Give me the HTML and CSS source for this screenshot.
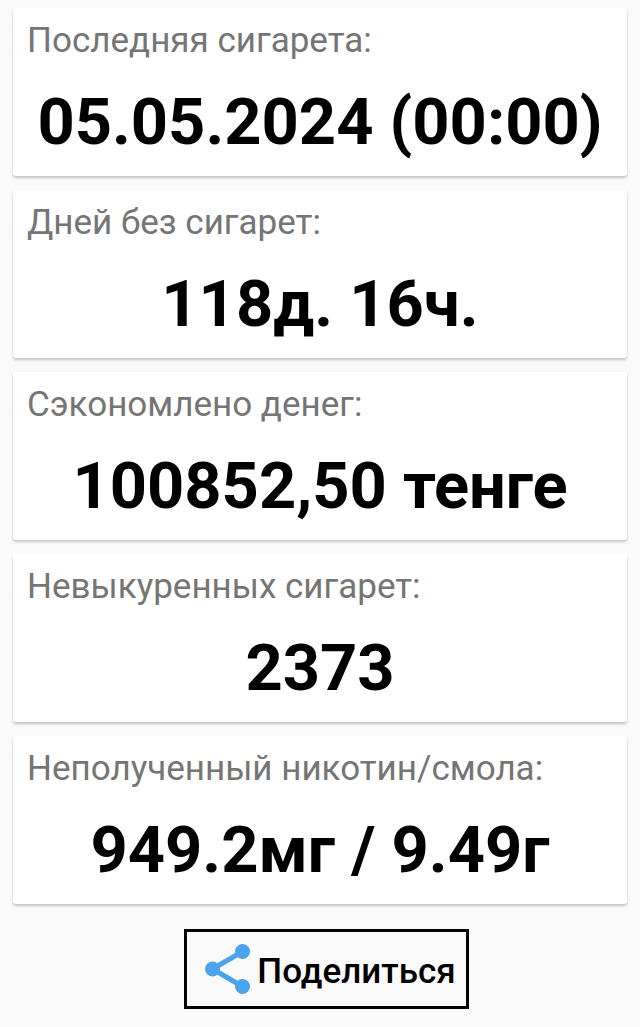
FILE: index.html
```html
<!DOCTYPE html>
<html lang="ru">

<head>
	<meta charset="UTF-8">
	<meta name="viewport" content="width=device-width, initial-scale=1.0">
	<title>Без сигарет</title>
	<link rel="stylesheet" href="styles.css">
</head>

<body>
	<main class="stats">
		<section class="card">
			<h2 class="label">Последняя сигарета:</h2>
			<p class="value">05.05.2024 (00:00)</p>
		</section>
		<section class="card">
			<h2 class="label">Дней без сигарет:</h2>
			<p class="value">118д. 16ч.</p>
		</section>
		<section class="card">
			<h2 class="label">Сэкономлено денег:</h2>
			<p class="value">100852,50 тенге</p>
		</section>
		<section class="card">
			<h2 class="label">Невыкуренных сигарет:</h2>
			<p class="value">2373</p>
		</section>
		<section class="card">
			<h2 class="label">Неполученный никотин/смола:</h2>
			<p class="value">949.2мг / 9.49г</p>
		</section>
	</main>

	<div class="bottom">
		<button type="button" class="share">
			<svg class="share-icon" viewBox="0 0 45 50" aria-hidden="true">
				<path d="M37.5 7.5 L7.5 25 L37.5 42.5" fill="none" stroke="#4ba3ec" stroke-width="5" />
				<circle cx="37.5" cy="7.5" r="7.5" />
				<circle cx="7.5" cy="25" r="7.5" />
				<circle cx="37.5" cy="42.5" r="7.5" />
			</svg>
			<span class="share-text">Поделиться</span>
		</button>
	</div>
</body>

</html>
```
FILE: styles.css
```css
body {
	margin: 0;
	background-color: #fafafa;
	font-family: Roboto, "Noto Sans", sans-serif;
}

.stats {
	display: flex;
	flex-direction: column;
	gap: 14px;
	padding: 8px 13px 0;
}

.card {
	box-sizing: border-box;
	min-height: 168px;
	padding: 13px 14px;
	background: #fff;
	border-radius: 3px;
	box-shadow: 0 2px 3px rgba(0, 0, 0, 0.22);
}

.label {
	margin: 0;
	font-size: 35px;
	line-height: 40px;
	font-weight: 400;
	color: #757575;
}

.value {
	margin: 23px 0 0;
	font-size: 65px;
	line-height: 76px;
	font-weight: 700;
	text-align: center;
	color: #000;
}

.bottom {
	display: flex;
	justify-content: center;
	padding: 25px 13px 18px 26px;
}

.share {
	display: flex;
	align-items: center;
	gap: 7px;
	height: 80px;
	padding: 0 10px 0 18px;
	background: #fafafa;
	border: 3px solid #000;
	font-family: inherit;
	font-size: 35px;
	font-weight: 500;
	color: #000;
	cursor: pointer;
}

.share-icon {
	width: 45px;
	height: 50px;
	fill: #4ba3ec;
}

.share-text {
	padding-top: 4px;
}
```
